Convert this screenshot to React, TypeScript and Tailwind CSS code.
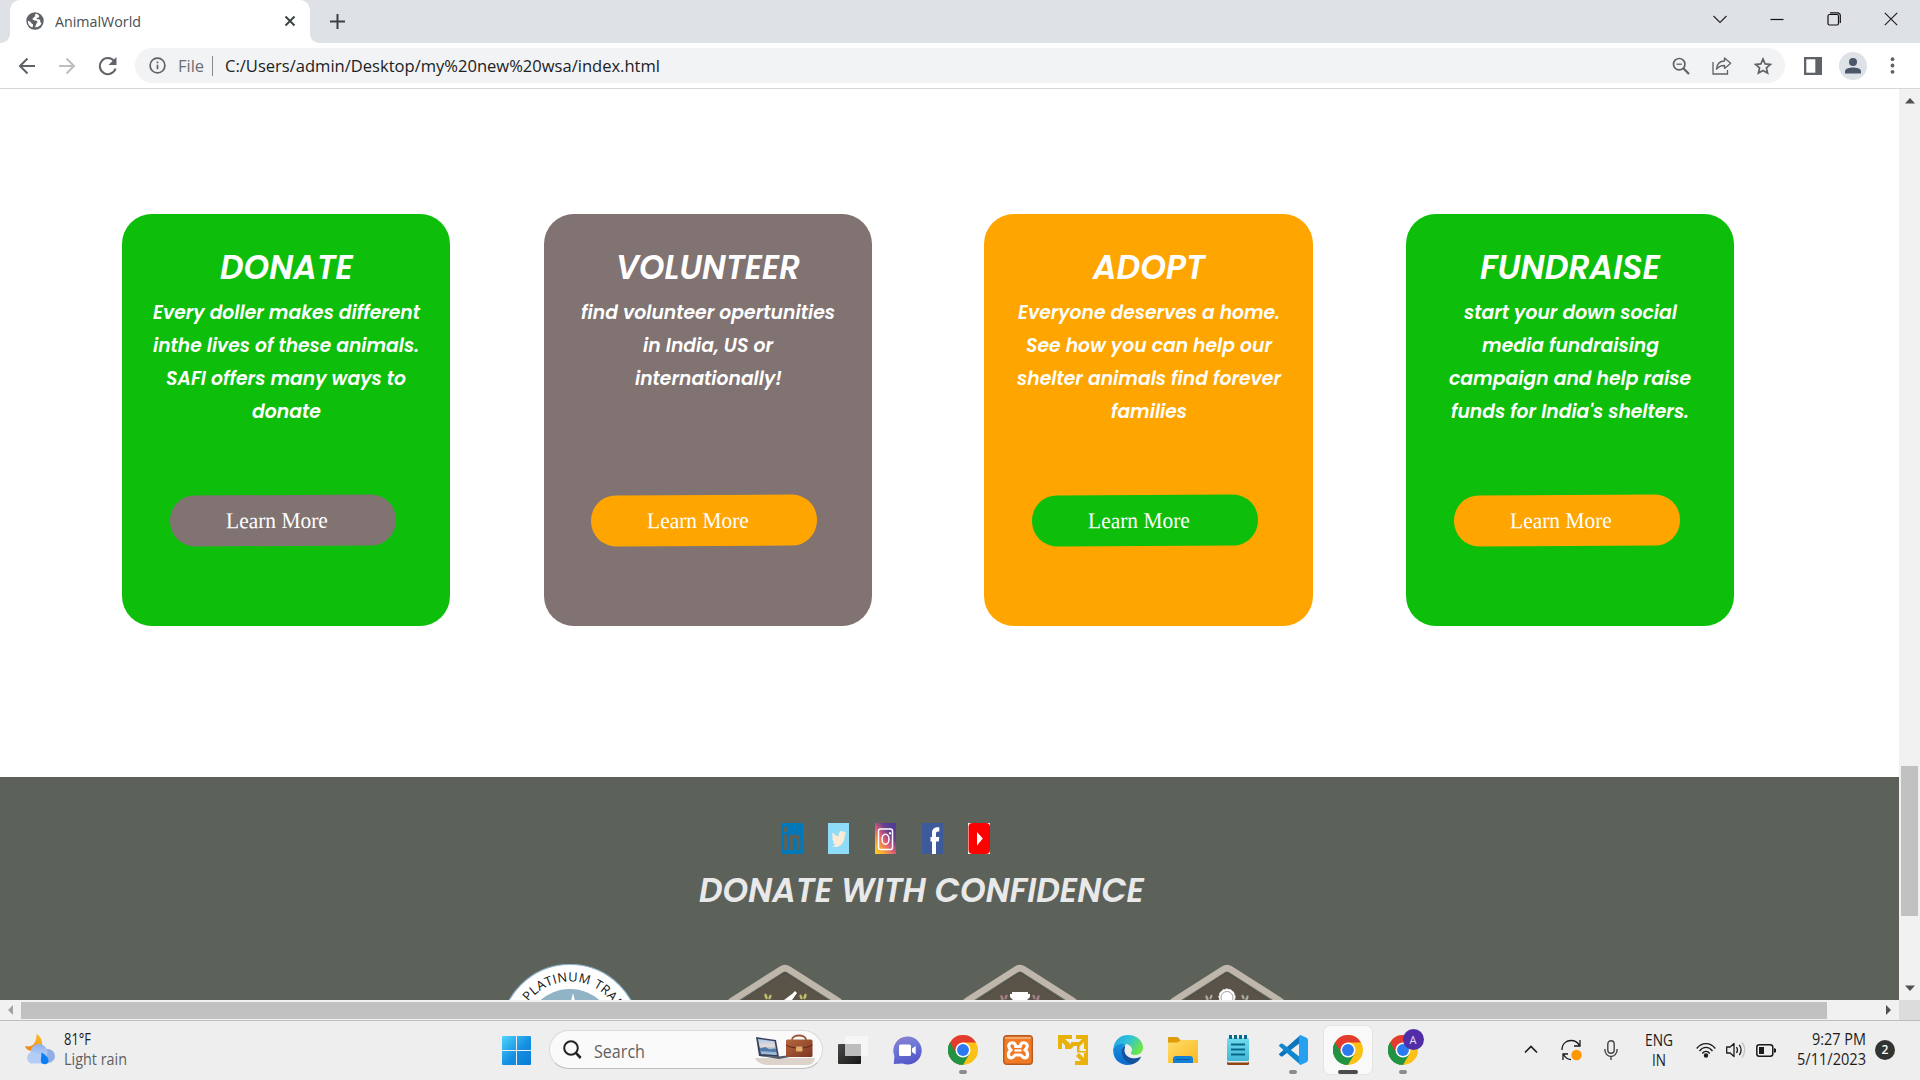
import { useLayoutEffect, useRef, useState, type ReactNode } from 'react';

/* Single line of text stretched horizontally to a known width. */
function Fit({ w, className = '', children }: { w: number; className?: string; children: ReactNode }) {
  const ref = useRef<HTMLSpanElement>(null);
  const [scale, setScale] = useState(1);
  useLayoutEffect(() => {
    if (ref.current && ref.current.offsetWidth) setScale(w / ref.current.getBoundingClientRect().width);
  }, [w]);
  return (
    <span className={`block shrink-0 ${className}`} style={{ width: w }}>
      <span ref={ref} className="inline-block origin-left whitespace-nowrap" style={{ transform: `scaleX(${scale})` }}>
        {children}
      </span>
    </span>
  );
}

const UI = "font-['Open_Sans',sans-serif]";
const POP = "font-['Poppins','Inter',sans-serif] [font-feature-settings:'cv11','ss03'] italic font-semibold";

function TabStrip() {
  return (
    <div className="flex h-[43px] shrink-0 bg-[#dee1e6]">
      <div className="flex w-[10px] items-end bg-white">
        <div className="h-full w-full rounded-br-[9px] bg-[#dee1e6]" />
      </div>
      <div className="flex w-[300px] items-center rounded-t-[10px] bg-white pb-[2px] pl-4 pr-[14px]">
        <svg width="18" height="18" viewBox="0 0 18 18">
          <circle cx="9" cy="9" r="8.7" fill="#5f6368" />
          <path d="M10.5 1.8c-2.2.3-2 1.6-.8 2.2-1.8.3-2.1 2.4-3.2 2.6-.4 1.6 2 1.9 3.6 2.2 1.8.5 1.6 1.8.4 2.5-.5 1.2-.7 2.6-1.8 3.9 2.6.5 5.5-1 6.8-3.6-1-.6-1.2-1.6-1.2-2.5 0-1.3-.7-1.8-2.5-1.8-1 .1-1.5-.8-.8-1.4.8-.3 2-.1 2.2-1.1.2-1.2-1.2-2.5-2.7-3zM1.8 8.8c.9 0 3.2 1 3.4 2.2.3 1.2 2.1.6 1.9 2-.1 1-.5 1.8-.6 2.6C3.5 14.500 1.700 12 1.800 8.800z" fill="#fff" />
        </svg>
        <Fit w={86} className={`${UI} ml-[11px] text-[15px] leading-[20px] text-[#4a4d51]`}>AnimalWorld</Fit>
        <svg className="ml-auto" width="12" height="12" viewBox="0 0 12 12" stroke="#3c4043" strokeWidth="1.900">
          <path d="M1.500 1.500l9 9M10.500 1.500l-9 9" />
        </svg>
      </div>
      <div className="flex w-[70px] bg-white">
        <div className="flex w-full items-center rounded-bl-[9px] bg-[#dee1e6] pl-[20px]">
          <svg width="15" height="15" viewBox="0 0 15 15" stroke="#3c4043" strokeWidth="2"><path d="M0 7.500h15M7.500 0v15" /></svg>
        </div>
      </div>
      <div className="ml-auto flex h-[37px] items-center gap-[43px] pr-[22px]">
        <svg width="14" height="14" viewBox="0 0 14 14" fill="none" stroke="#222" strokeWidth="1.100"><path d="M.5 4l6.500 6.500L13.500 4" /></svg>
        <svg width="14" height="14" viewBox="0 0 14 14" stroke="#111" strokeWidth="1.200"><path d="M.5 7.500h13" /></svg>
        <svg width="14" height="14" viewBox="0 0 14 14" fill="none" stroke="#111" strokeWidth="1.200">
          <rect x="1" y="2.500" width="10.500" height="10.500" rx="1.500" />
          <path d="M3 .8h7.500a2.800 2.800 0 0 1 2.800 2.800V11" />
        </svg>
        <svg width="14" height="14" viewBox="0 0 14 14" stroke="#222" strokeWidth="1.200"><path d="M.8.800l12.400 12.400M13.200.800L.8 13.200" /></svg>
      </div>
    </div>
  );
}

function Toolbar() {
  return (
    <div className="flex h-[46px] shrink-0 items-center border-b border-[#d5d8db] bg-white pl-[18px]">
      <svg width="18" height="18" viewBox="0 0 18 18" fill="none" stroke="#5f6368" strokeWidth="2"><path d="M17 9H2M9.500 1.500L2 9l7.500 7.500" /></svg>
      <svg className="ml-[22px]" width="18" height="18" viewBox="0 0 18 18" fill="none" stroke="#bcbec1" strokeWidth="2"><path d="M1 9h15M8.500 1.500L16 9l-7.500 7.500" /></svg>
      <svg className="ml-[22px]" width="20" height="20" viewBox="0 0 20 20" fill="none">
        <path d="M16.200 5.200A8 8 0 1 0 17.500 12.500" stroke="#5f6368" strokeWidth="2" />
        <path d="M18.500 1v8h-8z" fill="#5f6368" />
      </svg>
      <div className="ml-[17px] flex h-[35px] w-[1650px] items-center rounded-full bg-[#f1f3f4] pl-[14px]">
        <svg width="17" height="17" viewBox="0 0 17 17" fill="none" stroke="#5f6368" strokeWidth="1.700">
          <circle cx="8.500" cy="8.500" r="7.400" />
          <path d="M8.500 7.700v4.500M8.500 4.600v1.700" />
        </svg>
        <Fit w={26} className={`${UI} ml-[12px] text-[17px] leading-[24px] text-[#6a6e73]`}>File</Fit>
        <div className="ml-[8px] h-[20px] w-px bg-[#85898d]" />
        <Fit w={435} className={`${UI} ml-[12px] text-[17px] leading-[24px] text-[#202124]`}>C:/Users/admin/Desktop/my%20new%20wsa/index.html</Fit>
        <div className="ml-auto flex items-center gap-[22px] pr-[13px]">
          <svg width="18" height="18" viewBox="0 0 18 18" fill="none" stroke="#5f6368">
            <circle cx="7.200" cy="7.200" r="5.700" strokeWidth="1.700" />
            <path d="M11.300 11.300l5.700 5.700" strokeWidth="2.200" />
            <path d="M4.500 7.200h5.400" strokeWidth="1.300" />
          </svg>
          <svg width="20" height="20" viewBox="0 0 20 20" fill="none" stroke="#5f6368" strokeWidth="1.300">
            <path d="M1 6v12h14.500v-4" />
            <path d="M12.500 2l6.200 5.200-6.200 5.200V9.500c-3.500 0-6 1-8 3.700.4-4.500 3-8.200 8-8.200z" strokeLinejoin="round" />
          </svg>
          <svg width="18" height="18" viewBox="0 0 18 18" fill="none" stroke="#5f6368" strokeWidth="1.700">
            <path d="M9 2l2.100 4.900 5.300.5-4 3.500 1.200 5.200L9 13.400l-4.600 2.700 1.200-5.200-4-3.500 5.300-.5z" />
          </svg>
        </div>
      </div>
      <svg className="ml-[19px]" width="18" height="18" viewBox="0 0 18 18">
        <rect width="18" height="18" fill="#5f6368" />
        <rect x="2.300" y="2.300" width="9" height="13.400" fill="#fff" />
      </svg>
      <div className="ml-[17px] flex h-7 w-7 items-center justify-center rounded-full bg-[#dee1e6]">
        <svg width="16" height="16" viewBox="0 0 16 16" fill="#4c566b"><circle cx="8" cy="4" r="4" /><path d="M0 15.500v-2.300C0 10.600 5 9.600 8 9.600s8 1 8 3.600v2.300z" /></svg>
      </div>
      <svg className="ml-[23px]" width="5" height="17" viewBox="0 0 5 17" fill="#5f6368">
        <circle cx="2.500" cy="2.200" r="1.900" /><circle cx="2.500" cy="8.500" r="1.900" /><circle cx="2.500" cy="14.800" r="1.900" />
      </svg>
    </div>
  );
}

type CardData = { title: [string, number]; lines: [string, number][]; card: string; button: string };

const cards: CardData[] = [
  {
    title: ['DONATE', 133],
    lines: [['Every doller makes different', 267], ['inthe lives of these animals.', 266], ['SAFI offers many ways to', 240], ['donate', 69]],
    card: 'w-[328px] bg-[#0dbe0a]',
    button: 'ml-[48px] bg-[#807372]',
  },
  {
    title: ['VOLUNTEER', 184],
    lines: [['find volunteer opertunities', 254], ['in India, US or', 130], ['internationally!', 147]],
    card: 'w-[328px] bg-[#807372] ml-[94px]',
    button: 'ml-[47px] bg-[#ffa500]',
  },
  {
    title: ['ADOPT', 112],
    lines: [['Everyone deserves a home.', 262], ['See how you can help our', 246], ['shelter animals find forever', 264], ['families', 76]],
    card: 'w-[329px] bg-[#ffa500] ml-[112px]',
    button: 'ml-[48px] bg-[#0dbe0a]',
  },
  {
    title: ['FUNDRAISE', 180],
    lines: [['start your down social', 213], ['media fundraising', 177], ['campaign and help raise', 242], ["funds for India's shelters.", 238]],
    card: 'w-[328px] bg-[#0dbe0a] ml-[93px]',
    button: 'ml-[48px] bg-[#ffa500]',
  },
];

function Card({ data }: { data: CardData }) {
  return (
    <div className={`h-[412px] shrink-0 rounded-[30px] pt-[34px] text-white ${data.card}`}>
      <Fit w={data.title[1]} className={`${POP} mx-auto text-[33.500px] leading-[40px]`}>{data.title[0]}</Fit>
      <div className={`${POP} mt-[8px] flex h-[132px] flex-col items-center text-[20px] leading-[33px]`}>
        {data.lines.map(([t, w]) => <Fit key={t} w={w}>{t}</Fit>)}
      </div>
      <div className={`mt-[67px] h-[51px] w-[226px] -rotate-[0.25deg] rounded-[25px] pl-[56px] ${data.button}`}>
        <Fit w={102} className="font-['Liberation_Serif',serif] text-[22.500px] leading-[51px]">Learn More</Fit>
      </div>
    </div>
  );
}

function Socials() {
  return (
    <div className="ml-[781px] flex gap-[25px]">
      <svg width="22" height="31" viewBox="0 0 22 31">
        <rect width="22" height="31" rx="1.500" fill="#0378b8" />
        <g fill="#5c615a"><ellipse cx="4.800" cy="6.500" rx="2.200" ry="2.800" /><rect x="3" y="11.500" width="3.700" height="15.500" />
          <path d="M9 11.500h3.300v2.200c2-3.500 7-3 7 3V27h-3.500v-8.800c0-4.600-3.400-4-3.400 0V27H9z" /></g>
      </svg>
      <svg width="21" height="31" viewBox="0 0 21 31">
        <rect width="21" height="31" fill="#8edcf8" />
        <path d="M4.800 9.300c1.600 2.600 3.500 4 5.800 4.200-.5-5 3.500-7 5.600-4.300l1.800-.8-.9 2.200.9-.1-1.500 2.200c.4 7-5.500 14-12.200 10.300 1.500 0 2.700-.5 3.500-1.400-1.400-.2-2.300-1.100-2.700-2.600h1.200c-1.400-.8-2.100-2.200-2.100-4l1.100.4c-1.100-1.500-1.400-3.800-.5-6.100z" fill="#fdebd5" />
      </svg>
      <svg className="ml-px" width="21" height="31" viewBox="0 0 21 31">
        <defs><linearGradient id="ig" x1="0" y1="1" x2=".9" y2="0"><stop offset="0" stopColor="#ffd21c" /><stop offset=".25" stopColor="#f7a03c" /><stop offset=".48" stopColor="#de5a78" /><stop offset=".72" stopColor="#64408f" /><stop offset="1" stopColor="#503b96" /></linearGradient></defs>
        <rect width="21" height="31" fill="url(#ig)" />
        <g fill="none" stroke="#fff" strokeWidth="1.500"><rect x="3.500" y="6" width="14" height="20.500" rx="2" /><ellipse cx="10.500" cy="16.200" rx="3.500" ry="5" /></g>
        <ellipse cx="15" cy="10.200" rx="1" ry="1.200" fill="#fff" />
      </svg>
      <svg className="ml-px" width="21" height="31" viewBox="0 0 21 31">
        <rect width="21" height="31" fill="#3d5a9a" />
        <path d="M10 31V18.500H8.500V14H10v-3.500C10 6 12 3.700 17.300 4.300v4.300c-3-.3-3.300.6-3.300 2.400v3h3.300l-.5 4.500H14V31z" fill="#fff" />
      </svg>
      <svg width="22" height="31" viewBox="0 0 22 31">
        <rect width="22" height="31" fill="#fff" /><rect x=".5" width="21.500" height="31" rx="4" fill="#fe0000" />
        <path d="M9 9l5.800 6.500L9 22.500z" fill="#fff" />
      </svg>
    </div>
  );
}

function Hex({ children }: { children: ReactNode }) {
  return (
    <svg width="116" height="36" viewBox="0 0 116 36">
      <path d="M3 43Q2 38.500 5.500 36.500L54.500 5.200q3.500-2.200 7 0L110.500 36.500Q114 38.500 113 43" fill="#5c615a" stroke="#bfb7ac" strokeWidth="6.500" />
      <path d="M58 8.500L10 40h96z" fill="#5a5347" stroke="#4b473d" strokeWidth=".8" />
      {children}
    </svg>
  );
}

function Badges() {
  return (
    <div className="mt-[53px] flex h-[36px] overflow-hidden pl-[498px]">
      <svg width="144" height="36" viewBox="0 0 144 36">
        <circle cx="72" cy="70" r="69.500" fill="#fff" stroke="#8fb5cc" strokeWidth="1.200" />
        <circle cx="72" cy="70" r="45" fill="#90b3c6" />
        <path d="M75 29l-2 8h4z" fill="#fff" />
        <path id="ring" d="M19.500 70a52.500 52.500 0 0 1 105 0" fill="none" />
        <text className="font-['Open_Sans',sans-serif]" fontSize="12.800" fontWeight="500" fill="#111">
          <textPath href="#ring" startOffset="34.500" textLength="106">PLATINUM TRAN</textPath>
        </text>
      </svg>
      <div className="ml-[85px] h-[36px] w-[116px]">
        <Hex>
          <path d="M57 36l8-6 3-3 2 2-5 7z" fill="#fff" />
          <g fill="#c2c06c"><ellipse cx="39" cy="32.500" rx="1.400" ry="3" transform="rotate(-20 39 32.500)" /><ellipse cx="43" cy="33" rx="1.300" ry="2.600" transform="rotate(25 43 33)" /><ellipse cx="78" cy="32.500" rx="1.400" ry="3" transform="rotate(20 78 32.500)" /><ellipse cx="74" cy="33" rx="1.300" ry="2.600" transform="rotate(-25 74 33)" /></g>
        </Hex>
      </div>
      <div className="ml-[119px] h-[36px] w-[116px]">
        <Hex>
          <path d="M50 28h16v2h2v3l-3 3H51l-3-3v-3h2z" fill="#fff" />
          <g fill="#a8808a"><ellipse cx="40" cy="34" rx="1.300" ry="3" transform="rotate(-20 40 34)" /><ellipse cx="44" cy="33" rx="1.300" ry="2.600" transform="rotate(25 44 33)" /><ellipse cx="76" cy="34" rx="1.300" ry="3" transform="rotate(20 76 34)" /><ellipse cx="72" cy="33" rx="1.300" ry="2.600" transform="rotate(-25 72 33)" /></g>
        </Hex>
      </div>
      <div className="ml-[91px] h-[36px] w-[116px]">
        <Hex>
          <circle cx="58" cy="33" r="8" fill="#fff" stroke="#fff" strokeDasharray="2.500 1.500" />
          <circle cx="58" cy="33.500" r="6" fill="#fff" stroke="#777" strokeWidth=".7" />
          <g fill="#a9a9a4"><ellipse cx="38" cy="34" rx="1.200" ry="3" transform="rotate(-20 38 34)" /><ellipse cx="42" cy="33" rx="1.200" ry="2.600" transform="rotate(25 42 33)" /><ellipse cx="78" cy="34" rx="1.200" ry="3" transform="rotate(20 78 34)" /><ellipse cx="74" cy="33" rx="1.200" ry="2.600" transform="rotate(-25 74 33)" /></g>
        </Hex>
      </div>
    </div>
  );
}

function Page() {
  return (
    <div className="flex h-[911px] shrink-0">
      <div className="flex h-full w-[1899px] flex-col overflow-hidden bg-white">
        <div className="flex h-[688px] shrink-0 pl-[122px] pt-[125px]">
          {cards.map((c) => <Card key={c.title[0]} data={c} />)}
        </div>
        <div className="flex-1 bg-[#5c615a] pt-[46px]">
          <Socials />
          <Fit w={445} className={`${POP} ml-[699px] mt-[17px] text-[33.500px] leading-[40px] text-[#e9e9e9]`}>DONATE WITH CONFIDENCE</Fit>
          <Badges />
        </div>
      </div>
      <div className="flex w-[21px] flex-col items-center bg-[#f1f1f1] pt-[9px]">
        <svg width="10" height="6" viewBox="0 0 10 6" fill="#505050"><path d="M0 5.500L5 0l5 5.500z" /></svg>
        <div className="mt-[662px] h-[150px] w-[17px] bg-[#c1c1c1]" />
        <svg className="mt-[69px]" width="10" height="6" viewBox="0 0 10 6" fill="#505050"><path d="M0 .5L5 6l5-5.500z" /></svg>
      </div>
    </div>
  );
}

function HScroll() {
  return (
    <div className="flex h-[20px] shrink-0">
      <div className="flex w-[1899px] items-center bg-[#f1f1f1] pl-[8px]">
        <svg width="5" height="10" viewBox="0 0 5 10" fill="#a3a3a3"><path d="M5 0v10L0 5z" /></svg>
        <div className="ml-[8px] mt-px h-[17px] w-[1806px] bg-[#c1c1c1]" />
        <svg className="ml-[59px]" width="5" height="10" viewBox="0 0 5 10" fill="#505050"><path d="M0 0v10l5-5z" /></svg>
      </div>
      <div className="w-[21px] bg-[#dcdcdc]" />
    </div>
  );
}

function ChromeIcon() {
  return (
    <svg width="30" height="30" viewBox="0 0 48 48">
      <circle cx="24" cy="24" r="24" fill="#fbc116" />
      <path d="M24 24L3.200 12A24 24 0 0 0 24 48l10.400-18z" fill="#229342" />
      <path d="M3.200 12A24 24 0 0 1 44.800 12H24L13.600 30z" fill="#e33b2e" />
      <path d="M3.200 12l10.400 18L24 36l-4 11.700A24 24 0 0 1 3.200 12z" fill="#229342" />
      <circle cx="24" cy="24" r="12" fill="#fff" />
      <circle cx="24" cy="24" r="9.500" fill="#2b7af0" />
    </svg>
  );
}

function Task({ children, mark }: { children: ReactNode; mark?: boolean }) {
  return (
    <div className="flex h-full w-[55px] shrink-0 flex-col items-center pt-[14px]">
      <div className="flex h-[30px] items-center">{children}</div>
      {mark && <div className="mt-[5px] h-[4px] w-[8px] rounded-full bg-[#8b8b8b]" />}
    </div>
  );
}

function Weather() {
  return (
    <svg width="30" height="31" viewBox="0 0 30 31">
      <defs><linearGradient id="cl" x1="0" y1="0" x2="0" y2="1"><stop offset="0" stopColor="#8fb2ee" /><stop offset="1" stopColor="#c7dafb" /></linearGradient>
        <linearGradient id="mo" x1="1" y1="0" x2="0" y2="1"><stop offset="0" stopColor="#fbc02d" /><stop offset="1" stopColor="#ef7d15" /></linearGradient></defs>
      <path d="M11.500 0c6 3 8 12 2 16C7 19 1 16 0 12c6 2 12-2 11.500-12z" fill="url(#mo)" />
      <ellipse cx="22.500" cy="22" rx="7.500" ry="7" fill="#8fafe6" />
      <circle cx="14" cy="18.500" r="8.500" fill="url(#cl)" />
      <path d="M7 18a6 6 0 0 0-1 11.500h15c2-5-4-7-7-7-1-3-4-4.500-7-4.500z" fill="#b4cdf7" />
      <path d="M16.500 18.500c3.500 2 7 4.500 7 8a3.800 3.800 0 0 1-7.600 0c0-3 .6-4.500.6-8z" fill="#0c7df2" />
    </svg>
  );
}

function SearchBox() {
  return (
    <div className="ml-[18px] flex h-[39px] w-[274px] shrink-0 items-center rounded-full border border-[#d9d9d9] border-b-[#bdbdbd] bg-[#fafafa] pl-[13px]">
      <svg width="19" height="19" viewBox="0 0 19 19" fill="none" stroke="#222"><circle cx="8" cy="8" r="6.800" strokeWidth="2" /><path d="M12.700 12.700l5 5.300" strokeWidth="2.600" /></svg>
      <Fit w={51} className={`${UI} ml-[12px] mt-[2px] text-[17.500px] leading-[24px] text-[#616161]`}>Search</Fit>
      <svg className="ml-[110px]" width="60" height="32" viewBox="0 0 60 32">
        <defs><linearGradient id="bag" x1="0" y1="0" x2="1" y2="1"><stop offset="0" stopColor="#b9683f" /><stop offset="1" stopColor="#7b3520" /></linearGradient>
          <linearGradient id="scr" x1="0" y1="0" x2="0" y2="1"><stop offset="0" stopColor="#a9c8ec" /><stop offset=".45" stopColor="#e8dcd6" /><stop offset=".7" stopColor="#7ba3c9" /><stop offset="1" stopColor="#b3cbe0" /></linearGradient></defs>
        <path d="M0 24h60c-1 4-3 7-8 7H14C6 31 2 28 0 24z" fill="#dcd3cb" />
        <path d="M1 3l20 3 3 17-20-1z" fill="#39415c" /><path d="M3 5l16.500 2.300 2.500 13.700-16-1z" fill="url(#scr)" />
        <path d="M4.500 14.500l6-1.500 4 2.500 6-1 .7 3.500L5.500 17z" fill="#4f79a8" />
        <path d="M5 22l18 .5 14-1.500 3 1-16 3z" fill="#555a6d" />
        <path d="M37 6c0-6 14-6 14 0" fill="none" stroke="#9b5636" strokeWidth="1.800" />
        <rect x="31" y="5.500" width="26.500" height="17.500" rx="1.500" fill="url(#bag)" />
        <path d="M31 11c5 4 21 4 26.500 0" fill="none" stroke="#5f2615" strokeWidth="1" />
        <rect x="41" y="12.500" width="6.500" height="5" rx="1" fill="#e2ac6c" />
      </svg>
    </div>
  );
}

function Taskbar() {
  return (
    <div className={`${UI} flex h-[60px] shrink-0 border-t border-[#bdbdbd] bg-[#eeeeee] text-[15.500px] leading-[20px] text-[#1c1c1c]`}>
      <div className="flex w-[502px] shrink-0 pl-[25px] pt-[13px]">
        <Weather />
        <div className="-mt-[5px] ml-[9px]">
          <Fit w={27}>81°F</Fit>
          <Fit w={63} className="text-[#5e5e5e]">Light rain</Fit>
        </div>
      </div>
      <div className="flex shrink-0 pt-[9px]">
        <svg className="mt-[6px]" width="29" height="29" viewBox="0 0 29 29">
          <defs><linearGradient id="win" gradientUnits="userSpaceOnUse" x1="0" y1="0" x2="29" y2="29"><stop offset="0" stopColor="#4fd3fc" /><stop offset=".55" stopColor="#148fe2" /><stop offset="1" stopColor="#0a7bd6" /></linearGradient></defs>
          <path d="M1 0h13v14H0V1q0-1 1-1zM15 0h13q1 0 1 1v13H15zM0 15h14v14H1q-1 0-1-1zM15 15h14v13q0 1-1 1H15z" fill="url(#win)" />
        </svg>
        <SearchBox />
      </div>
      <div className="ml-[2px] flex shrink-0">
        <Task>
          <svg width="30" height="28" viewBox="0 0 30 28">
            <defs><linearGradient id="tv" x1="0" y1="0" x2="1" y2="1"><stop offset="0" stopColor="#4a4a47" /><stop offset="1" stopColor="#171717" /></linearGradient></defs>
            <rect y="8" width="23" height="20" rx="1" fill="url(#tv)" /><rect x="7" width="23" height="20" rx="1" fill="#f6f6f6" /><rect x="7" y="8" width="16" height="12" fill="#bdbdbd" />
          </svg>
        </Task>
        <Task>
          <svg width="29" height="29" viewBox="0 0 29 29">
            <defs><linearGradient id="chat" x1=".2" y1="0" x2=".5" y2="1"><stop offset="0" stopColor="#8a80cf" /><stop offset=".4" stopColor="#6f78d6" /><stop offset="1" stopColor="#5256c9" /></linearGradient></defs>
            <path d="M14.500.5a14 14 0 1 1-5 27L.8 28l.6-8A14 14 0 0 1 14.500.5z" fill="url(#chat)" />
            <rect x="6" y="8.500" width="12" height="11.500" rx="1.500" fill="#fff" /><path d="M19 12.500l3.700-2.500v8.500L19 16z" fill="#fff" />
          </svg>
        </Task>
        <Task mark><ChromeIcon /></Task>
        <Task>
          <svg width="30" height="30" viewBox="0 0 30 30">
            <rect x=".7" y=".7" width="28.600" height="28.600" rx="3" fill="#f17a25" stroke="#b65c20" strokeWidth="1.400" />
            <path d="M2 2h26v2H2z" fill="#f6a66c" />
            <path d="M15 11.500h-2.500c.3-5.500-7.500-4.500-6.700 0 .2 1.600 1 2.600 2.200 3.500-3.300 2-3.500 7.500 0 7.800 2.500.2 3-2.800 4.500-2.800h5c1.500 0 2 3 4.500 2.800 3.500-.3 3.300-5.800 0-7.800 1.200-.9 2-1.900 2.200-3.500.8-4.500-7-5.500-6.700 0z" fill="none" stroke="#fff" strokeWidth="3.200" strokeLinejoin="round" />
            <path d="M11.500 15.500h7" stroke="#fff" strokeWidth="2.200" />
          </svg>
        </Task>
        <Task>
          <svg width="30" height="30" viewBox="0 0 30 30" fill="#e9b20a">
            <path d="M0 0h14v4H7l6 5.500V7h8l3-3h-6V0h12v14h-4V7l-4.500 4.500V16H28v-3.500h2V19h-2v-1.500h-9V11h-3l-3 3H7v-3.500L4 7.500V14H0z" />
            <path d="M30 18v12H17v-4h6l-5-5 3-3 5 5v-5z" />
          </svg>
        </Task>
        <Task>
          <svg width="30" height="30" viewBox="0 0 30 30">
            <defs><linearGradient id="e1" x1="0" y1="0" x2="1" y2=".5"><stop offset="0" stopColor="#1c9fe6" /><stop offset=".5" stopColor="#2fc2d9" /><stop offset="1" stopColor="#6be64b" /></linearGradient>
              <linearGradient id="e2" x1="0" y1="0" x2="0" y2="1"><stop offset="0" stopColor="#1692dc" /><stop offset="1" stopColor="#0a6bd0" /></linearGradient></defs>
            <path d="M.3 13C2 4 8 0 15 0c9 0 15 6 15 12.500 0 5-4 7.500-8 7.500-3 0-4.500-1-4-2.500 2.500-2.500.5-7.500-5-8.500C8 8.500 2.500 10 .3 13z" fill="url(#e1)" />
            <path d="M.3 13.500C3 8.800 9 8 13 9.500c-3 1.500-4.500 5-4 9 .7 5 5 9.500 10 10.800C10 32-1 26 .3 13.500z" fill="url(#e2)" />
            <path d="M12.500 10.500C9 12 8 16 9 20c1.500 6 7 9.500 10.500 9.300 4-1.200 7-4 8.300-6.800.3-.8-.4-1-1-.6C20 25.500 12 22 11.500 16c0-2 .5-4 1-5.500z" fill="#11539e" />
          </svg>
        </Task>
        <Task>
          <svg width="30" height="27" viewBox="0 0 30 27">
            <defs><linearGradient id="fo" x1="0" y1="0" x2="1" y2="1"><stop offset="0" stopColor="#ffdc69" /><stop offset="1" stopColor="#f9b921" /></linearGradient></defs>
            <path d="M0 8V1q0-1 1-1h8.500l3 3H29q1 0 1 1v4z" fill="#dd9c08" /><path d="M0 5.500h9.500L13 3h16q1 0 1 1v22H0z" fill="url(#fo)" />
            <path d="M5 26v-4q0-3 3-3h14q3 0 3 3v4z" fill="#1280d4" /><path d="M8.500 22.500h13" stroke="#0a58a6" />
          </svg>
        </Task>
        <Task>
          <svg width="22" height="30" viewBox="0 0 22 30">
            <defs><linearGradient id="no" x1="0" y1="0" x2="0" y2="1"><stop offset="0" stopColor="#71dcef" /><stop offset="1" stopColor="#41b6d5" /></linearGradient></defs>
            <rect y="22" width="22" height="8" rx="1.500" fill="#8f4412" /><rect y="20" width="22" height="7.500" rx="1.500" fill="#e9e9e9" /><rect y="3" width="22" height="23" rx="1.500" fill="url(#no)" />
            <path d="M4 9.500h14M4 14.500h14M4 19.500h14" stroke="#0a6688" strokeWidth="2" />
            <path d="M3.500 0v4M8.500 0v4M13.500 0v4M18.500 0v4" stroke="#0a6688" strokeWidth="3" />
          </svg>
        </Task>
        <Task mark>
          <svg width="30" height="30" viewBox="0 0 30 30">
            <path d="M.7 19.200l2 2q1 .7 2 0L22.500 7.500V0z" fill="#0b74bd" />
            <path d="M.7 10.800l2-2q1-.7 2 0l17.800 13.700V30z" fill="#1187cf" />
            <path d="M22.500 0l6 2.800Q30 3.500 30 5v20q0 1.500-1.500 2.200l-6 2.800-1.500-1.500V1.500z" fill="#27a1ef" />
          </svg>
        </Task>
        <div className="flex h-full w-[55px] justify-center pt-[5px]">
          <div className="flex h-[48px] w-[48px] flex-col items-center rounded-[6px] bg-[#f9f9f9] pt-[9px] shadow-[0_0_1px_1px_#e4e4e4]">
            <ChromeIcon />
            <div className="mt-[5px] h-[4px] w-[20px] shrink-0 rounded-full bg-[#4c4c4c]" />
          </div>
        </div>
        <Task mark>
          <div className="relative">
            <ChromeIcon />
            <div className="absolute -top-[6px] left-[15px] flex h-[21px] w-[21px] items-center justify-center rounded-full bg-[#512da8] text-[11px] text-[#e6def5]">A</div>
          </div>
        </Task>
      </div>
      <div className="ml-auto flex shrink-0 pr-[25px] pt-[9px]">
        <svg className="mt-[15px]" width="14" height="9" viewBox="0 0 14 9" fill="none" stroke="#1c1c1c" strokeWidth="1.700"><path d="M1 7.500l6-6 6 6" /></svg>
        <svg className="ml-[23px] mt-[9px]" width="21" height="22" viewBox="0 0 21 22" fill="none" stroke="#1c1c1c" strokeWidth="1.300">
          <path d="M1 11C1 4 6 1.500 10 1.500c4 0 7 2 8.800 5.500M19 1v6h-6M2 21v-6h5M2.500 15.500C4.500 19 7 20.500 10 20.500" />
          <circle cx="15.500" cy="16" r="5.200" fill="#ff9800" stroke="none" />
        </svg>
        <svg className="ml-[22px] mt-[10px]" width="14" height="20" viewBox="0 0 14 20" fill="none" stroke="#444" strokeWidth="1.400">
          <rect x="3.800" y=".8" width="6.400" height="12.500" rx="3.200" /><path d="M.8 9c0 10 12.400 10 12.400 0M7 16v4" />
        </svg>
        <div className="ml-[27px] flex w-[28px] flex-col items-center">
          <Fit w={28}>ENG</Fit>
          <Fit w={14}>IN</Fit>
        </div>
        <svg className="ml-[23px] mt-[12px]" width="20" height="16" viewBox="0 0 20 16" fill="none" stroke="#1c1c1c" strokeWidth="1.400">
          <path d="M.7 6.500c5-6.500 13.600-6.500 18.600 0M3.500 9c3.700-4.800 9.300-4.800 13 0M6.300 11.500c2-2.800 5.400-2.800 7.400 0" /><circle cx="10" cy="13.500" r="1.500" fill="#1c1c1c" />
        </svg>
        <svg className="ml-[10px] mt-[11px]" width="20" height="18" viewBox="0 0 20 18" fill="none" stroke="#1c1c1c" strokeWidth="1.300">
          <path d="M.7 6h3.500L8 2.500v13L4.200 12H.7z" strokeLinejoin="round" /><path d="M10.500 6q2 3 0 6M13.300 3.800q3.600 5.200 0 10.400" /><path d="M16 1.500q5.400 7.500 0 15" stroke="#c2c2c2" />
        </svg>
        <svg className="ml-[10px] mt-[14px]" width="20" height="13" viewBox="0 0 20 13">
          <rect x=".8" y=".8" width="16" height="11.400" rx="2.500" fill="none" stroke="#1c1c1c" strokeWidth="1.500" /><rect x="3" y="3" width="5" height="7" fill="#1c1c1c" /><path d="M18 4l2 1v3l-2 1z" fill="#1c1c1c" />
        </svg>
        <div className="-mt-px ml-[21px] flex w-[69px] flex-col items-end">
          <Fit w={54}>9:27 PM</Fit>
          <Fit w={69}>5/11/2023</Fit>
        </div>
        <div className="ml-[9px] mt-[10px] flex h-[20px] w-[20px] items-center justify-center rounded-full bg-[#333331] text-[12px] font-semibold text-white">2</div>
      </div>
    </div>
  );
}

export default function App() {
  return (
    <div className="flex h-[1080px] w-[1920px] flex-col overflow-hidden bg-white">
      <TabStrip />
      <Toolbar />
      <Page />
      <HScroll />
      <Taskbar />
    </div>
  );
}
